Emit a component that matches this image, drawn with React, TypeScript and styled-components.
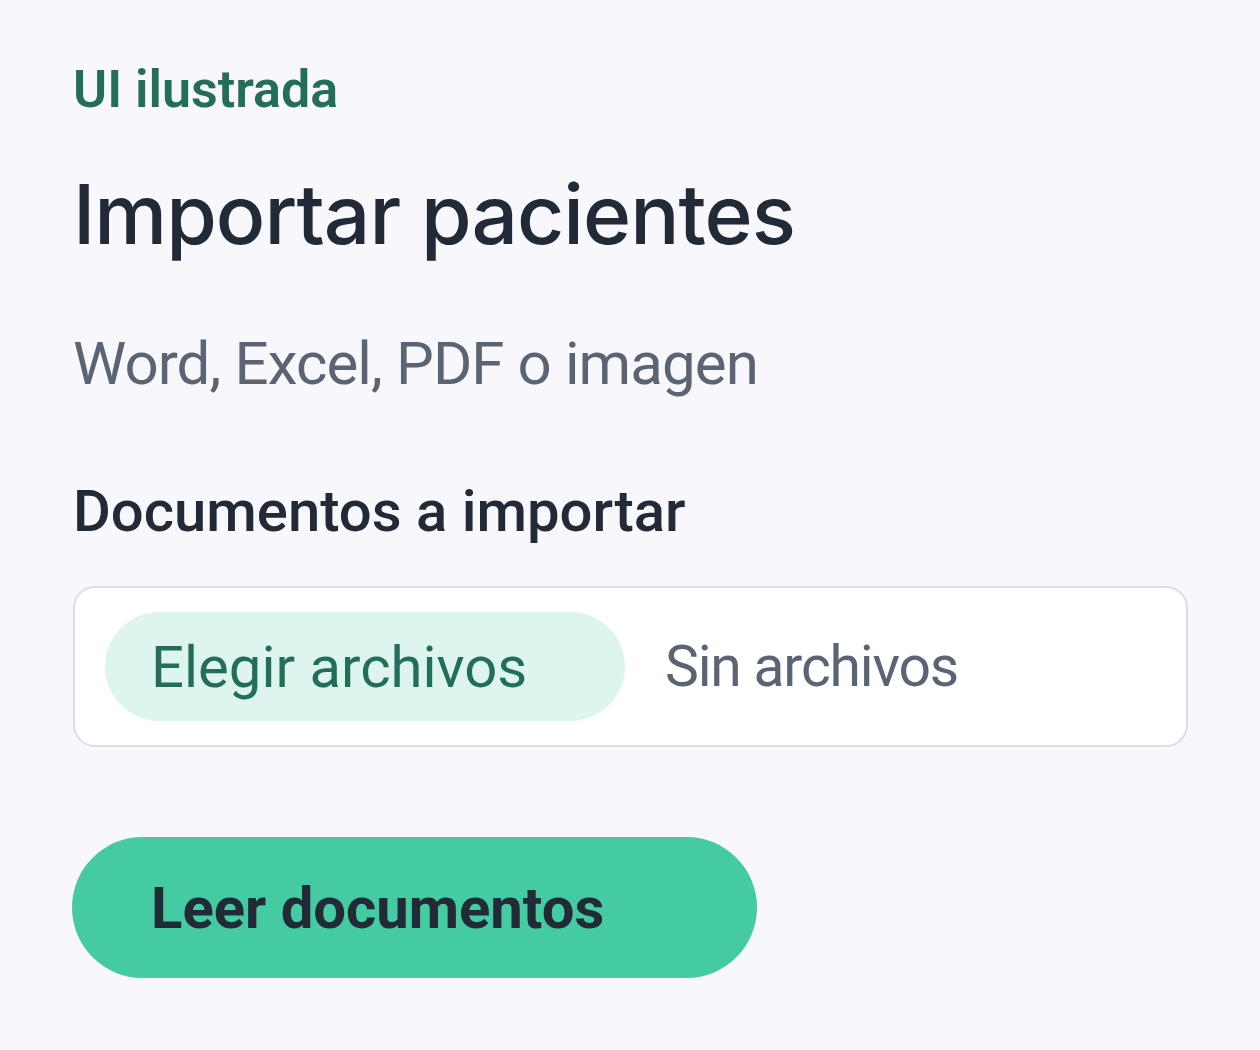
import React from 'react';
import styled, {createGlobalStyle} from 'styled-components';

const GlobalStyle = createGlobalStyle`
  html, body {
    margin: 0;
    padding: 0;
    background: #f7f7fc;
  }
  body {
    font-family: Roboto, "Noto Sans", sans-serif;
  }
`;

export default function App() {
  return (
    <>
      <GlobalStyle />
      <Root>
        <Eyebrow>UI ilustrada</Eyebrow>
        <Title>Importar pacientes</Title>
        <Subtitle>Word, Excel, PDF o imagen</Subtitle>
        <Label>Documentos a importar</Label>
        <FileField>
          <ChooseButton type="button">Elegir archivos</ChooseButton>
          <FileStatus>Sin archivos</FileStatus>
        </FileField>
        <PrimaryButton type="button">Leer documentos</PrimaryButton>
      </Root>
    </>
  );
}

const Root = styled.div`
  display: flex;
  flex-direction: column;
  align-items: flex-start;
  padding: 58px 72px 60px 73px;
  min-height: 1050px;
  box-sizing: border-box;
`;

const Eyebrow = styled.div`
  font-size: 52px;
  font-weight: 600;
  line-height: 64px;
  color: #236e5a;
`;

const Title = styled.h1`
  margin: 43px 0 0;
  font-family: Inter, "Noto Sans", sans-serif;
  font-size: 82px;
  font-weight: 500;
  line-height: 100px;
  letter-spacing: -1px;
  color: #222a38;
`;

const Subtitle = styled.div`
  margin-top: 61px;
  font-size: 60px;
  font-weight: 400;
  line-height: 76px;
  letter-spacing: -0.9px;
  color: #5b6472;
`;

const Label = styled.div`
  margin-top: 74px;
  font-size: 58px;
  font-weight: 500;
  line-height: 70px;
  color: #222a38;
`;

const FileField = styled.div`
  margin-top: 40px;
  align-self: stretch;
  display: flex;
  align-items: center;
  gap: 40px;
  height: 161px;
  padding: 0 30px;
  box-sizing: border-box;
  background: #ffffff;
  border: 2px solid #dcdce6;
  border-radius: 22px;
`;

const ChooseButton = styled.button`
  height: 109px;
  width: 520px;
  border: none;
  border-radius: 55px;
  background: #ddf5ee;
  color: #236e5a;
  font-family: inherit;
  font-size: 58px;
  font-weight: 400;
  text-align: left;
  padding: 0 0 0 46px;
  cursor: pointer;
`;

const FileStatus = styled.span`
  font-size: 57px;
  letter-spacing: -1.2px;
  color: #5b6472;
`;

const PrimaryButton = styled.button`
  margin-top: 90px;
  margin-left: -1px;
  height: 141px;
  width: 685px;
  border: none;
  border-radius: 71px;
  background: #44cba2;
  color: #222a38;
  font-family: inherit;
  font-size: 58px;
  font-weight: 700;
  text-align: left;
  padding: 0 0 0 79px;
  cursor: pointer;
`;
